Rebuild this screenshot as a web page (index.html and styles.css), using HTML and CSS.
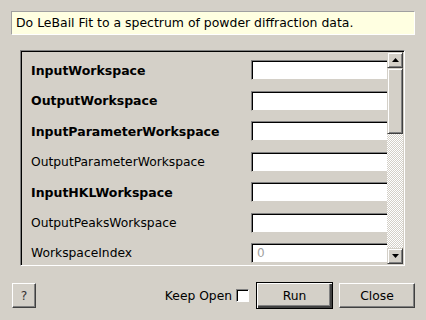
FILE: index.html
```html
<!DOCTYPE html>
<html>
<head>
<meta charset="utf-8">
<link rel="stylesheet" href="styles.css">
</head>
<body>
<div class="dialog">
  <div class="desc">Do LeBail Fit to a spectrum of powder diffraction data.</div>
  <div class="frame">
    <div class="props">
      <div class="row"><span class="label req">InputWorkspace</span><span class="field"></span></div>
      <div class="row"><span class="label req">OutputWorkspace</span><span class="field"></span></div>
      <div class="row"><span class="label req">InputParameterWorkspace</span><span class="field"></span></div>
      <div class="row"><span class="label">OutputParameterWorkspace</span><span class="field"></span></div>
      <div class="row"><span class="label req">InputHKLWorkspace</span><span class="field"></span></div>
      <div class="row"><span class="label">OutputPeaksWorkspace</span><span class="field"></span></div>
      <div class="row"><span class="label">WorkspaceIndex</span><span class="field placeholder">0</span></div>
    </div>
    <div class="scrollbar">
      <div class="sb-btn"><svg width="7" height="4" viewBox="0 0 7 4"><path d="M3.5 0 L7 4 L0 4 Z" fill="#000"/></svg></div>
      <div class="sb-thumb"></div>
      <div class="sb-track"></div>
      <div class="sb-btn"><svg width="7" height="4" viewBox="0 0 7 4"><path d="M0 0 L7 0 L3.5 4 Z" fill="#000"/></svg></div>
    </div>
  </div>
  <div class="buttons">
    <button class="btn help">?</button>
    <span class="spacer"></span>
    <label class="keep">Keep Open <span class="check"></span></label>
    <button class="btn run">Run</button>
    <button class="btn close">Close</button>
  </div>
</div>
</body>
</html>
```

FILE: styles.css
```css
* { box-sizing: border-box; }
html, body { margin: 0; padding: 0; }
body {
  background: #d4d0c8;
  font-family: "DejaVu Sans", sans-serif;
  font-size: 12px;
  color: #000;
  width: 426px;
  height: 320px;
  overflow: hidden;
}
.dialog {
  display: flex;
  flex-direction: column;
  padding: 11px 11px 0 11px;
}
.desc {
  height: 24px;
  background: #ffffe1;
  border: 1px solid;
  border-color: #a0a0a0 #ffffff #ffffff #a0a0a0;
  padding: 0 0 0 4px;
  line-height: 22px;
  font-size: 12.45px;
}
.frame {
  margin: 15px 10px 0 9px;
  height: 216px;
  display: flex;
  border: 1px solid;
  border-color: #808080 #ffffff #ffffff #808080;
  box-shadow: inset 1px 1px 0 #000, inset -1px -1px 0 #d4d0c8;
  padding: 1px;
}
.props {
  flex: 1;
  min-width: 0;
  overflow: hidden;
  display: flex;
  flex-direction: column;
  gap: 10.5px;
  padding: 8px 0 0 9px;
}
.row {
  display: flex;
  align-items: center;
  height: 20px;
  flex: none;
}
.label {
  width: 220px;
  flex: none;
  font-size: 12.3px;
}
.label.req { font-weight: bold; font-size: 12.5px; }
.field {
  display: block;
  width: 170px;
  flex: none;
  height: 20px;
  background: #fff;
  border: 1px solid;
  border-color: #808080 #ffffff #d4d0c8 #808080;
  box-shadow: inset 1px 1px 0 #000;
  padding-left: 5px;
  line-height: 18px;
  font-size: 12px;
}
.field.placeholder { color: #a0a0a0; }
.scrollbar {
  width: 16px;
  flex: none;
  display: flex;
  flex-direction: column;
}
.sb-btn, .sb-thumb {
  background: #d4d0c8;
  border: 1px solid;
  border-color: #d4d0c8 #404040 #404040 #d4d0c8;
  box-shadow: inset 1px 1px 0 #fff, inset -1px -1px 0 #808080;
}
.sb-btn {
  height: 16px;
  flex: none;
  display: flex;
  align-items: center;
  justify-content: center;
}
.sb-thumb { height: 66px; flex: none; }
.sb-track {
  flex: 1;
  background: repeating-conic-gradient(#ffffff 0 25%, #d4d0c8 0 50%) 0 0 / 2px 2px;
}
.buttons {
  display: flex;
  align-items: center;
  margin-top: 16px;
}
.spacer { flex: 1; }
.btn {
  font-family: "DejaVu Sans", sans-serif;
  font-size: 12.3px;
  color: #000;
  background: #d4d0c8;
  border: 1px solid;
  border-color: #ffffff #404040 #404040 #ffffff;
  box-shadow: inset -1px -1px 0 #808080;
  height: 25px;
  padding: 0;
  margin: 0;
}
.help { width: 24px; margin-left: 1px; color: #333; }
.run {
  width: 77px;
  height: 27px;
  border: 1px solid #000;
  box-shadow: inset 1px 1px 0 #fff, inset -2px -2px 0 #404040, inset -3px -3px 0 #808080;
  margin-left: 7px;
}
.close { width: 76px; margin-left: 6px; }
.keep {
  display: flex;
  align-items: center;
  gap: 4px;
  font-size: 12.3px;
}
.check {
  display: inline-block;
  width: 13px;
  height: 13px;
  background: #fff;
  border: 1px solid;
  border-color: #808080 #ffffff #ffffff #808080;
  box-shadow: inset 1px 1px 0 #000;
}
```
